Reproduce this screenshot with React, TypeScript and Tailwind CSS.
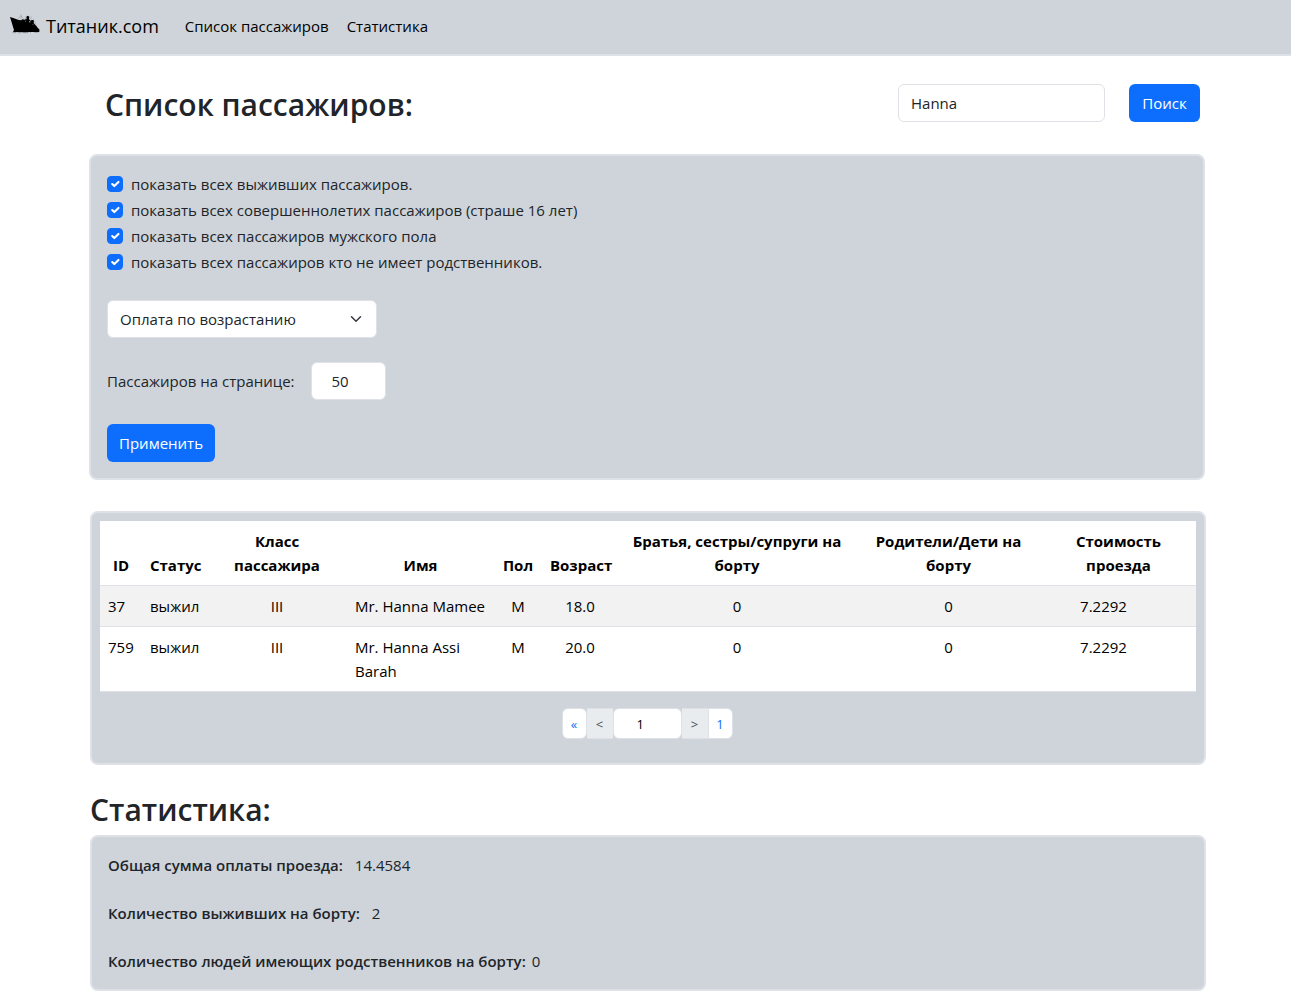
import { useState } from "react";
import type { ReactNode } from "react";

const filters = [
  "показать всех выживших пассажиров.",
  "показать всех совершеннолетих пассажиров (страше 16 лет)",
  "показать всех пассажиров мужского пола",
  "показать всех пассажиров кто не имеет родственников.",
];

const passengers = [
  { id: 37, status: "выжил", cls: "III", name: "Mr. Hanna Mamee", sex: "М", age: "18.0", siblings: 0, parents: 0, fare: "7.2292" },
  { id: 759, status: "выжил", cls: "III", name: "Mr. Hanna Assi Barah", sex: "М", age: "20.0", siblings: 0, parents: 0, fare: "7.2292" },
];

const columns = [
  { title: "ID", width: "w-[42px]" },
  { title: "Статус", width: "w-[65px]" },
  { title: "Класс пассажира", width: "w-[140px]" },
  { title: "Имя", width: "w-[147px]" },
  { title: "Пол", width: "w-[48px]" },
  { title: "Возраст", width: "w-[76px]" },
  { title: "Братья, сестры/супруги на борту", width: "w-[238px]" },
  { title: "Родители/Дети на борту", width: "w-[185px]" },
  { title: "Стоимость проезда", width: "w-[155px]" },
];

const stats = [
  { label: "Общая сумма оплаты проезда:", value: "14.4584", gap: "gap-3" },
  { label: "Количество выживших на борту:", value: "2", gap: "gap-3" },
  { label: "Количество людей имеющих родственников на борту:", value: "0", gap: "gap-1.5" },
];

function ShipLogo() {
  return (
    <svg viewBox="0 0 90 60" className="h-5 w-[30px]" aria-hidden="true">
      <path d="M0 9 L12 13 L26 18 L34 19 L37 16 L44 17 L50 14 L49 8 L53 5 L58 8 L57 15 L61 20 L66 18 L70 18 L72 22 L71 27 L76 33 L80 37 L84 43 L88 46 L88 54 L60 54 L40 55 L9 54 L12 48 L8 35 L4 22 Z" />
      <path d="M33 0V18M24 15L33 5L42 17M46 8V17M63 7V19M76 23V34M71 15V24" stroke="#000" strokeWidth="1.2" opacity=".35" fill="none" />
      <path d="M44 20L49 20L48 23ZM57 20L62 23L60 26L57 24ZM67 30L71 32L69 34Z" fill="#ced4da" opacity=".7" />
      <path d="M7 56H18M26 57H31M40 56H55M60 56H63M72 55H85" stroke="#000" strokeWidth="1.5" opacity=".5" />
    </svg>
  );
}

function Panel({ className, children }: { className: string; children: ReactNode }) {
  return <div className={`rounded-lg border-2 border-[#dee2e6] bg-[#ced4da] ${className}`}>{children}</div>;
}

function FilterCheck({ label }: { label: string }) {
  return (
    <label className="mb-0.5 flex h-6 w-fit items-center gap-2">
      <span className="grid size-4">
        <input
          type="checkbox"
          defaultChecked
          className="peer col-start-1 row-start-1 size-4 appearance-none rounded border border-[#dee2e6] bg-white checked:border-[#0d6efd] checked:bg-[#0d6efd]"
        />
        <svg viewBox="0 0 20 20" className="pointer-events-none invisible col-start-1 row-start-1 size-4 p-px peer-checked:visible">
          <path d="m6 10 3 3 6-6" fill="none" stroke="#fff" strokeWidth="3" strokeLinecap="round" strokeLinejoin="round" />
        </svg>
      </span>
      {label}
    </label>
  );
}

export default function App() {
  const [query, setQuery] = useState("Hanna");
  const [perPage, setPerPage] = useState("50");
  const [page, setPage] = useState("1");

  return (
    <div className="bg-white pb-2 font-['Open_Sans','Noto_Sans',sans-serif] text-[15px] leading-6 text-[#212529]">
      <nav className="flex h-14 items-center border-b-2 border-[#dee2e6] bg-[#ced4da] px-2.5 pb-0.5 text-black">
        <a href="#" className="mr-[26px] flex items-center gap-1.5 text-lg">
          <span className="pb-1">
            <ShipLogo />
          </span>
          Титаник.com
        </a>
        <div className="flex gap-[18px]">
          <a href="#list">Список пассажиров</a>
          <a href="#stats">Статистика</a>
        </div>
      </nav>

      <main className="mx-auto max-w-[1141px] pr-[10px] pl-[15px]">
        <header id="list" className="flex items-center justify-between py-7 pr-1.5 pl-[15px]">
          <h1 className="pt-1 text-3xl leading-[34px] font-semibold">Список пассажиров:</h1>
          <form className="flex gap-6" onSubmit={(e) => e.preventDefault()}>
            <input
              type="search"
              aria-label="Поиск"
              value={query}
              onChange={(e) => setQuery(e.target.value)}
              className="h-[38px] w-[207px] appearance-none rounded-md border border-[#dee2e6] px-3"
            />
            <button type="submit" className="h-[38px] w-[71px] rounded-md bg-[#0d6efd] text-white">
              Поиск
            </button>
          </form>
        </header>

        <Panel className="mt-1 -ml-px mr-px p-4">
          <form onSubmit={(e) => e.preventDefault()}>
            <div className="flex flex-col">
              {filters.map((f) => (
                <FilterCheck key={f} label={f} />
              ))}
            </div>
            <div className="mt-6 grid w-[270px] items-center">
              <select aria-label="Сортировка" className="col-start-1 row-start-1 h-[38px] appearance-none rounded-md border border-[#dee2e6] bg-white px-3">
                <option>Оплата по возрастанию</option>
                <option>Оплата по убыванию</option>
              </select>
              <svg viewBox="0 0 16 16" className="pointer-events-none col-start-1 row-start-1 mr-[15px] h-3 w-3 justify-self-end">
                <path d="m2 5 6 6 6-6" fill="none" stroke="#343a40" strokeWidth="2" strokeLinecap="round" strokeLinejoin="round" />
              </svg>
            </div>
            <label className="mt-6 flex w-fit items-center gap-4">
              Пассажиров на странице:
              <input
                type="text"
                inputMode="numeric"
                value={perPage}
                onChange={(e) => setPerPage(e.target.value)}
                className="h-[38px] w-[75px] rounded-md border border-[#dee2e6] bg-white pr-3 pl-5"
              />
            </label>
            <button type="submit" className="mt-6 h-[38px] rounded-md bg-[#0d6efd] px-3 text-white">
              Применить
            </button>
          </form>
        </Panel>

        <Panel className="mt-[31px] px-2 pt-2 pb-6">
          <table className="w-full table-fixed border-collapse bg-white text-black">
            <thead>
              <tr className="border-b border-[#dee2e6]">
                {columns.map((c) => (
                  <th key={c.title} scope="col" className={`p-2 text-center align-bottom font-bold ${c.width}`}>
                    {c.title}
                  </th>
                ))}
              </tr>
            </thead>
            <tbody>
              {passengers.map((p) => (
                <tr key={p.id} className="border-b border-[#dee2e6] text-center align-top odd:bg-[#f2f2f2]">
                  <td className="p-2 text-left">{p.id}</td>
                  <td className="p-2">{p.status}</td>
                  <td className="p-2">{p.cls}</td>
                  <td className="p-2 text-left">{p.name}</td>
                  <td className="p-2">{p.sex}</td>
                  <td className="p-2">{p.age}</td>
                  <td className="p-2">{p.siblings}</td>
                  <td className="p-2">{p.parents}</td>
                  <td className="py-2 pr-[38px] pl-2">{p.fare}</td>
                </tr>
              ))}
            </tbody>
          </table>
          <nav aria-label="Страницы" className="mt-4 mr-0.5 flex justify-center text-[13px]">
            <a href="#first" className="flex h-[31px] w-[25px] items-center justify-center rounded-md border border-[#dee2e6] bg-white text-[#0d6efd]">
              «
            </a>
            <button type="button" className="h-[31px] w-[26px] border-y border-[#dee2e6] bg-[#e9ecef] text-[#495057]">
              &lt;
            </button>
            <input
              type="text"
              aria-label="Номер страницы"
              value={page}
              onChange={(e) => setPage(e.target.value)}
              className="h-[31px] w-[69px] rounded-md border border-[#dee2e6] bg-white pr-2 pl-[23px] text-black"
            />
            <button type="button" className="h-[31px] w-[26px] border-y border-[#dee2e6] bg-[#e9ecef] text-[#495057]">
              &gt;
            </button>
            <a href="#last" className="flex h-[31px] w-[25px] items-center justify-center rounded-r-md border border-[#dee2e6] bg-white text-[#0d6efd]">
              1
            </a>
          </nav>
        </Panel>

        <section id="stats">
          <h2 className="mt-7 mb-2 text-3xl leading-[34px] font-semibold">Статистика:</h2>
          <Panel className="flex flex-col gap-6 p-4">
            {stats.map((s) => (
              <div key={s.label} className={`flex ${s.gap}`}>
                <span className="font-semibold">{s.label}</span>
                <span>{s.value}</span>
              </div>
            ))}
          </Panel>
        </section>
      </main>
    </div>
  );
}
